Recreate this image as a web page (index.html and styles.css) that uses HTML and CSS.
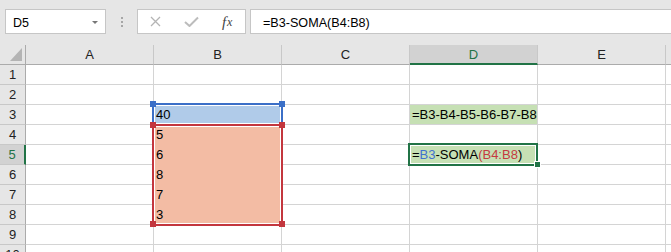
FILE: index.html
```html
<!DOCTYPE html>
<html lang="pt">
<head>
    <meta charset="UTF-8">
    <title>Planilha</title>
    <link rel="stylesheet" href="styles.css">
</head>
<body>
    <div class="toolbar">
        <div class="name-box"><span>D5</span><span class="name-arrow"></span></div>
        <div class="grip"><i></i><i></i><i></i></div>
        <div class="fx-box">
            <span class="fx-slot">
                <svg width="11" height="11" viewBox="0 0 11 11"><path d="M1 1 L10 10 M10 1 L1 10" stroke="#b4b4b4" stroke-width="1.3" fill="none"/></svg>
            </span>
            <span class="fx-slot">
                <svg width="15" height="11" viewBox="0 0 15 11"><path d="M1 6 L5.5 10 L14 1.5" stroke="#bcbcbc" stroke-width="2" fill="none"/></svg>
            </span>
            <span class="fx-slot fx-text"><i>f</i><i class="fx-x">x</i></span>
        </div>
        <div class="formula-input">=B3-SOMA(B4:B8)</div>
    </div>

    <div class="sheet">
        <div class="grid">
            <div class="hd corner"><span class="corner-tri"></span></div>
            <div class="hd">A</div>
            <div class="hd">B</div>
            <div class="hd">C</div>
            <div class="hd hd-active">D</div>
            <div class="hd">E</div>
            <div class="hd"></div>

            <div class="rh">1</div>
            <div class="c"></div><div class="c"></div><div class="c"></div><div class="c"></div><div class="c"></div><div class="c"></div>

            <div class="rh">2</div>
            <div class="c"></div><div class="c"></div><div class="c"></div><div class="c"></div><div class="c"></div><div class="c"></div>

            <div class="rh">3</div>
            <div class="c"></div><div class="c fill-blue">40</div><div class="c"></div><div class="c fill-green">=B3-B4-B5-B6-B7-B8</div><div class="c"></div><div class="c"></div>

            <div class="rh">4</div>
            <div class="c"></div><div class="c fill-red">5</div><div class="c"></div><div class="c"></div><div class="c"></div><div class="c"></div>

            <div class="rh rh-active">5</div>
            <div class="c"></div><div class="c fill-red">6</div><div class="c"></div><div class="c fill-green">=<span class="ref-b">B3</span>-SOMA<span class="ref-r">(B4:B8</span>)</div><div class="c"></div><div class="c"></div>

            <div class="rh">6</div>
            <div class="c"></div><div class="c fill-red">8</div><div class="c"></div><div class="c"></div><div class="c"></div><div class="c"></div>

            <div class="rh">7</div>
            <div class="c"></div><div class="c fill-red">7</div><div class="c"></div><div class="c"></div><div class="c"></div><div class="c"></div>

            <div class="rh">8</div>
            <div class="c"></div><div class="c fill-red">3</div><div class="c"></div><div class="c"></div><div class="c"></div><div class="c"></div>

            <div class="rh">9</div>
            <div class="c"></div><div class="c"></div><div class="c"></div><div class="c"></div><div class="c"></div><div class="c"></div>

            <div class="rh">10</div>
            <div class="c"></div><div class="c"></div><div class="c"></div><div class="c"></div><div class="c"></div><div class="c"></div>
        </div>

        <!-- range highlights drawn over the grid -->
        <div class="range range-blue">
            <span class="handle tl"></span><span class="handle tr"></span>
        </div>
        <div class="range range-red">
            <span class="handle tl"></span><span class="handle tr"></span>
            <span class="handle bl"></span><span class="handle br"></span>
        </div>
        <div class="selection"><span class="fill-handle"></span></div>
    </div>
</body>
</html>
```

FILE: styles.css
```css
body {
    margin: 0;
    width: 671px;
    height: 252px;
    overflow: hidden;
    background-color: #fff;
    font-family: "Liberation Sans", Arial, sans-serif;
    font-size: 13px;
    color: #000;
}

/* formula bar */
.toolbar {
    display: flex;
    height: 45px;
    box-sizing: border-box;
    padding: 9px 0 0 5px;
    background-color: #e6e6e6;
}

.name-box {
    width: 101px;
    height: 25px;
    box-sizing: border-box;
    border: 1px solid #c6c6c6;
    background-color: #fff;
    display: flex;
    justify-content: space-between;
    padding: 3px 7px 0 7px;
    line-height: 20px;
    font-size: 12.5px;
}

.name-arrow {
    width: 0;
    height: 0;
    margin-top: 8px;
    border-left: 3px solid transparent;
    border-right: 3px solid transparent;
    border-top: 3px solid #777;
}

.grip {
    width: 31px;
    display: flex;
    flex-direction: column;
    align-items: center;
    gap: 2px;
    padding-top: 8px;
}

.grip i {
    width: 2px;
    height: 2px;
    background-color: #a6a6a6;
}

.fx-box {
    width: 109px;
    height: 25px;
    box-sizing: border-box;
    border: 1px solid #c6c6c6;
    background-color: #fff;
    display: grid;
    grid-template-columns: repeat(3, 1fr);
    align-items: center;
}

.fx-slot {
    display: flex;
    justify-content: center;
    align-items: center;
}

.fx-text {
    font-family: "Liberation Serif", "Times New Roman", serif;
    font-size: 15px;
    color: #444;
    padding-top: 1px;
}

.fx-text i {
    font-style: italic;
}

.fx-x {
    font-size: 12px;
    margin-left: 1px;
}

.formula-input {
    flex: 1;
    height: 25px;
    box-sizing: border-box;
    margin-left: 4px;
    border: 1px solid #c6c6c6;
    border-right: none;
    background-color: #fff;
    padding: 3px 0 0 12px;
    line-height: 20px;
    font-size: 12.6px;
    white-space: nowrap;
}

/* sheet */
.sheet {
    position: relative;
}

.grid {
    display: grid;
    grid-template-columns: 26px repeat(5, 128px) 6px;
    grid-auto-rows: 20px;
}

.hd {
    background-color: #e6e6e6;
    border-right: 1px solid #c8c8c8;
    border-bottom: 1px solid #ababab;
    box-sizing: border-box;
    text-align: center;
    line-height: 19px;
    color: #222;
}

.corner {
    position: relative;
    border-right-color: #ababab;
}

.corner-tri {
    position: absolute;
    right: 3px;
    bottom: 3px;
    width: 0;
    height: 0;
    border-left: 12px solid transparent;
    border-bottom: 13px solid #b4b4b4;
}

.hd-active {
    background-color: #d2d2d2;
    color: #217346;
    border-bottom: 2px solid #217346;
}

.rh {
    background-color: #e6e6e6;
    border-right: 1px solid #ababab;
    border-bottom: 1px solid #c8c8c8;
    box-sizing: border-box;
    text-align: center;
    line-height: 20px;
    color: #222;
}

.rh-active {
    background-color: #d2d2d2;
    color: #217346;
    border-right: 2px solid #217346;
}

.c {
    border-right: 1px solid #d4d4d4;
    border-bottom: 1px solid #d4d4d4;
    box-sizing: border-box;
    padding: 1px 0 0 2px;
    line-height: 18px;
    white-space: nowrap;
}

.fill-blue {
    background-color: #b0cbe9;
}

.fill-red {
    background-color: #f3bca4;
    border-bottom-color: #f3bca4;
}

.fill-green {
    background-color: #c6e0b4;
}

.ref-b {
    color: #3f72cf;
}

.ref-r {
    color: #c53a3f;
}

/* reference boxes */
.range {
    position: absolute;
    left: 152px;
    width: 131px;
    box-sizing: border-box;
    box-shadow: inset 0 0 0 1px #fff;
}

.range-blue {
    top: 58px;
    height: 21px;
    border: 2px solid #3b6fc7;
    border-bottom: none;
}

.range-red {
    top: 79px;
    height: 102px;
    border: 2px solid #c3363e;
}

.handle {
    position: absolute;
    width: 6px;
    height: 6px;
}

.range-blue .handle {
    background-color: #3b6fc7;
}

.range-red .handle {
    background-color: #c3363e;
}

.handle.tl { left: -4px; top: -4px; }
.handle.tr { right: -4px; top: -4px; }
.handle.bl { left: -4px; bottom: -3px; }
.handle.br { right: -4px; bottom: -3px; }

.selection {
    position: absolute;
    left: 408px;
    top: 98px;
    width: 130px;
    height: 23px;
    box-sizing: border-box;
    border: 2px solid #217346;
    box-shadow: inset 0 0 0 1px #fff;
}

.fill-handle {
    position: absolute;
    right: -5px;
    bottom: -4px;
    width: 5px;
    height: 5px;
    background-color: #217346;
    border: 1px solid #fff;
}
```
